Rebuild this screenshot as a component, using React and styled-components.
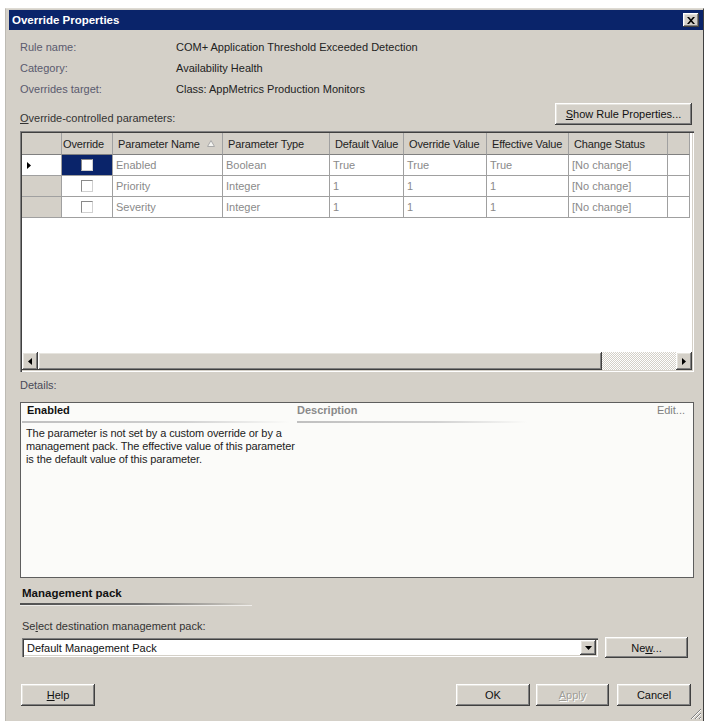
import React from 'react';
import styled, { createGlobalStyle } from 'styled-components';

const GlobalStyle = createGlobalStyle`
  html, body { margin: 0; padding: 0; background: #fff; }
  body {
    font-family: "Liberation Sans", Arial, sans-serif;
    font-size: 11px;
    color: #222;
    overflow: hidden;
  }
  * { box-sizing: border-box; }
`;

const raised = `
  background: #d4d0c8;
  box-shadow: inset -1px -1px #404040, inset 1px 1px #fff, inset -2px -2px #808080, inset 2px 2px #e6e4de;
`;

const sunken = `
  box-shadow: inset 1px 1px #808080, inset 2px 2px #404040, inset -1px -1px #fff, inset -2px -2px #d4d0c8;
`;

const Window = styled.div`
  position: relative;
  margin: 8px 0 0 5px;
  width: 699px;
  height: 713px;
  background: #d4d0c8;
  border-top: 1px solid #dedbd4;
  border-left: 1px solid #bdbab3;
  border-right: 1px solid #404040;
  padding: 1px 0 0 3px;
  display: flex;
  flex-direction: column;
`;

const TitleBar = styled.div`
  height: 20px;
  background: #0a246a;
  display: flex;
  align-items: center;
  justify-content: space-between;
  padding: 0 4px 0 3px;
`;

const Title = styled.span`
  color: #fff;
  font-weight: bold;
  font-size: 11.5px;
`;

const CloseBox = styled.div`
  ${raised};
  width: 16px;
  height: 14px;
  display: flex;
  align-items: center;
  justify-content: center;
`;

const Content = styled.div`
  flex: 1;
  display: flex;
  flex-direction: column;
  padding: 0 9px 0 11px;
`;

const InfoGrid = styled.div`
  margin-top: 7px;
  display: grid;
  grid-template-columns: 156px 1fr;
  grid-auto-rows: 21px;
  line-height: 21px;
`;

const InfoLabel = styled.div`
  color: #5a5a6e;
`;

const InfoValue = styled.div`
  color: #222;
`;

const ParamsBar = styled.div`
  height: 25px;
  display: flex;
  justify-content: space-between;
  align-items: flex-end;
`;

const Label = styled.div`
  line-height: 14px;
  color: ${p => p.$muted ? '#4a4a58' : '#333'};
  margin-top: ${p => p.$top || 0}px;
  padding-left: ${p => p.$pad || 0}px;
`;

const Button = styled.div`
  ${raised};
  width: ${p => p.$w}px;
  height: ${p => p.$h || 22}px;
  margin-left: ${p => p.$ml || 0}px;
  margin-right: ${p => p.$mr || 0}px;
  display: flex;
  align-items: center;
  justify-content: center;
  color: ${p => p.$disabled ? '#a09e98' : '#111'};
  text-shadow: ${p => p.$disabled ? '1px 1px #fff' : 'none'};
  flex-shrink: 0;
`;

const DataGrid = styled.div`
  ${sunken};
  margin-top: 6px;
  height: 241px;
  background: #fff;
  padding: 2px;
  display: flex;
  flex-direction: column;
`;

const GridRow = styled.div`
  display: grid;
  grid-template-columns: 40px 51px 110px 107px 74px 83px 82px 99px 22px;
  height: ${p => p.$h}px;
`;

const HeadCell = styled.div`
  background: #d4d0c8;
  border-right: 1px solid #a0a0a0;
  border-bottom: 1px solid #808080;
  display: flex;
  align-items: center;
  justify-content: ${p => p.$center ? 'center' : 'flex-start'};
  padding: 0 7px 0 ${p => p.$center ? 0 : 5}px;
  color: #222;
  white-space: nowrap;
  letter-spacing: -0.15px;
`;

const RowHead = styled.div`
  background: ${p => p.$current ? '#fff' : '#d4d0c8'};
  border-right: 1px solid #a0a0a0;
  border-bottom: 1px solid #a0a0a0;
  display: flex;
  align-items: center;
  padding-left: 5px;
`;

const Cell = styled.div`
  background: ${p => p.$selected ? '#0a246a' : '#fff'};
  border-right: 1px solid #a0a0a0;
  border-bottom: 1px solid #a0a0a0;
  display: flex;
  align-items: center;
  justify-content: ${p => p.$center ? 'center' : 'flex-start'};
  padding-left: ${p => p.$center ? 0 : 3}px;
  color: #8a8a8a;
  white-space: nowrap;
`;

const Check = styled.div`
  width: 12px;
  height: 12px;
  background: #fff;
  border: 1px solid;
  border-color: #8a8a8a #d0d0d0 #d0d0d0 #8a8a8a;
`;

const GridSpacer = styled.div`
  flex: 1;
`;

const ScrollBar = styled.div`
  height: 18px;
  display: flex;
`;

const ScrollArrow = styled.div`
  ${raised};
  width: 16px;
  display: flex;
  align-items: center;
  justify-content: center;
`;

const ScrollThumb = styled.div`
  ${raised};
  width: 564px;
`;

const ScrollTrack = styled.div`
  flex: 1;
  background: repeating-conic-gradient(#d4d0c8 0 25%, #fff 0 50%) 0 0 / 2px 2px;
`;

const DetailsBox = styled.div`
  margin-top: 10px;
  height: 176px;
  border: 1px solid #5e5e5e;
  background: #fbfbf9;
  padding: 0 8px 0 1px;
  display: grid;
  grid-template-columns: 268px 1fr;
  column-gap: 7px;
  align-content: start;
`;

const PaneHead = styled.div`
  height: 18px;
  line-height: 15px;
  padding-left: ${p => p.$pad || 0}px;
  font-weight: bold;
  color: ${p => p.$muted ? '#8a8a8a' : '#111'};
  display: flex;
  justify-content: space-between;
`;

const HeadRule = styled.div`
  width: ${p => p.$w}px;
  height: 2px;
  background: linear-gradient(to right, #c0c0c0, #d0d0d0 60%, rgba(251,251,249,0));
`;

const Edit = styled.span`
  font-weight: normal;
  color: #808080;
`;

const Paragraph = styled.p`
  margin: 4px 0 0 4px;
  line-height: 13px;
  color: #222;
  white-space: nowrap;
  letter-spacing: -0.1px;
`;

const SectionTitle = styled.div`
  margin-top: 8px;
  padding-left: 2px;
  line-height: 14px;
  font-weight: bold;
  font-size: 11.5px;
  color: #111;
`;

const SectionRule = styled.div`
  margin-top: 3px;
  width: 232px;
  height: 2px;
  background: linear-gradient(to right, #505050, #707070 50%, rgba(212,208,200,0));
  box-shadow: 0 1px rgba(255,255,255,0.6);
`;

const ComboRow = styled.div`
  margin-top: 4px;
  height: 21px;
  display: flex;
  align-items: center;
  padding-left: 2px;
`;

const Combo = styled.div`
  ${sunken};
  width: 576px;
  height: 19px;
  background: #fff;
  display: flex;
  align-items: center;
  padding: 2px;
  color: #111;
`;

const ComboText = styled.span`
  padding-left: 3px;
  flex: 1;
`;

const DropButton = styled.div`
  ${raised};
  width: 16px;
  height: 15px;
  display: flex;
  align-items: center;
  justify-content: center;
`;

const ButtonRow = styled.div`
  margin-top: 26px;
  display: flex;
  align-items: center;
`;

const Spacer = styled.div`
  flex: 1;
`;

const Grip = styled.svg`
  position: absolute;
  right: 1px;
  bottom: 1px;
`;

const columns = ['Parameter Type', 'Default Value', 'Override Value', 'Effective Value', 'Change Status'];

const rows = [
  { name: 'Enabled', type: 'Boolean', def: 'True', over: 'True', eff: 'True', status: '[No change]', current: true },
  { name: 'Priority', type: 'Integer', def: '1', over: '1', eff: '1', status: '[No change]' },
  { name: 'Severity', type: 'Integer', def: '1', over: '1', eff: '1', status: '[No change]' },
];

const Tri = ({ dir }) => {
  const pts = {
    left: '4,0 0,3.5 4,7',
    right: '0,0 4,3.5 0,7',
  }[dir];
  return (
    <svg width="4" height="7" viewBox="0 0 4 7"><polygon points={pts} fill="#000" /></svg>
  );
};

export default function App() {
  return (
    <>
      <GlobalStyle />
      <Window>
        <TitleBar>
          <Title>Override Properties</Title>
          <CloseBox>
            <svg width="8" height="7" viewBox="0 0 8 7">
              <path d="M0 0h2l2 2.3L6 0h2L5 3.5 8 7H6L4 4.7 2 7H0l3-3.5z" fill="#000" />
            </svg>
          </CloseBox>
        </TitleBar>

        <Content>
          <InfoGrid>
            <InfoLabel>Rule name:</InfoLabel>
            <InfoValue>COM+ Application Threshold Exceeded Detection</InfoValue>
            <InfoLabel>Category:</InfoLabel>
            <InfoValue>Availability Health</InfoValue>
            <InfoLabel>Overrides target:</InfoLabel>
            <InfoValue>Class: AppMetrics Production Monitors</InfoValue>
          </InfoGrid>

          <ParamsBar>
            <Label><u>O</u>verride-controlled parameters:</Label>
            <Button $w={137} $mr={2}><span><u>S</u>how Rule Properties...</span></Button>
          </ParamsBar>

          <DataGrid>
            <GridRow $h={22}>
              <HeadCell />
              <HeadCell $center>Override</HeadCell>
              <HeadCell>
                Parameter Name
                <svg width="8" height="7" viewBox="0 0 8 7" style={{ marginLeft: 'auto' }}>
                  <polygon points="4,0.5 7.5,6.5 0.5,6.5" fill="#f4f4f0" stroke="#a8a8a8" />
                </svg>
              </HeadCell>
              {columns.map(c => <HeadCell key={c}>{c}</HeadCell>)}
              <HeadCell />
            </GridRow>
            {rows.map(r => (
              <GridRow $h={21} key={r.name}>
                <RowHead $current={r.current}>{r.current && <Tri dir="right" />}</RowHead>
                <Cell $center $selected={r.current}><Check /></Cell>
                <Cell>{r.name}</Cell>
                <Cell>{r.type}</Cell>
                <Cell>{r.def}</Cell>
                <Cell>{r.over}</Cell>
                <Cell>{r.eff}</Cell>
                <Cell>{r.status}</Cell>
                <Cell />
              </GridRow>
            ))}
            <GridSpacer />
            <ScrollBar>
              <ScrollArrow><Tri dir="left" /></ScrollArrow>
              <ScrollThumb />
              <ScrollTrack />
              <ScrollArrow><Tri dir="right" /></ScrollArrow>
            </ScrollBar>
          </DataGrid>

          <Label $muted $top={6}>Details:</Label>

          <DetailsBox>
            <div>
              <PaneHead $pad={5}>Enabled</PaneHead>
              <HeadRule $w={268} />
              <Paragraph>
                The parameter is not set by a custom override or by a<br />
                management pack. The effective value of this parameter<br />
                is the default value of this parameter.
              </Paragraph>
            </div>
            <div>
              <PaneHead $muted>
                Description
                <Edit>Edit...</Edit>
              </PaneHead>
              <HeadRule $w={230} />
            </div>
          </DetailsBox>

          <SectionTitle>Management pack</SectionTitle>
          <SectionRule />

          <Label $top={14} $pad={2}>Se<u>l</u>ect destination management pack:</Label>

          <ComboRow>
            <Combo>
              <ComboText>Default Management Pack</ComboText>
              <DropButton>
                <svg width="7" height="4" viewBox="0 0 7 4"><polygon points="0,0 7,0 3.5,4" fill="#000" /></svg>
              </DropButton>
            </Combo>
            <Button $w={83} $h={21} $ml={7}><span>Ne<u>w</u>...</span></Button>
          </ComboRow>

          <ButtonRow>
            <Button $w={74} $ml={1}><span><u>H</u>elp</span></Button>
            <Spacer />
            <Button $w={74}>OK</Button>
            <Button $w={73} $ml={6} $disabled><span><u>A</u>pply</span></Button>
            <Button $w={74} $ml={8} $mr={3}>Cancel</Button>
          </ButtonRow>
        </Content>

        <Grip width="12" height="12" viewBox="0 0 12 12">
          <path d="M11 1L1 11M11 5L5 11M11 9L9 11" stroke="#808080" strokeWidth="1" />
          <path d="M11 2L2 11M11 6L6 11M11 10L10 11" stroke="#fff" strokeWidth="1" />
        </Grip>
      </Window>
    </>
  );
}
